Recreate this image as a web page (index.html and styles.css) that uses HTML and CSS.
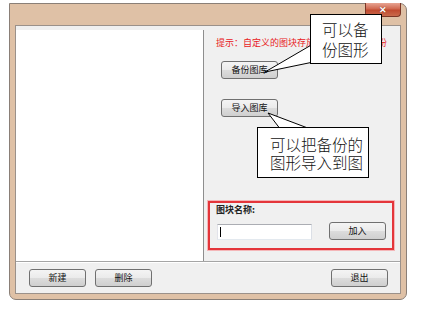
FILE: index.html
```html
<!DOCTYPE html>
<html lang="zh-CN">
<head>
    <title>图库管理</title>
    <link rel="stylesheet" href="styles.css">
</head>
<body>
    <div class="window">
        <div class="titlebar">
            <div class="close-btn">✕</div>
        </div>
        <div class="client">
            <div class="main">
                <div class="list"></div>
                <div class="side">
                    <p class="hint">提示：自定义的图块存放在图库中，请备份</p>
                    <button class="btn btn-backup">备份图库</button>
                    <button class="btn btn-import">导入图库</button>
                    <div class="name-group">
                        <div class="name-label">图块名称:</div>
                        <div class="name-row">
                            <div class="name-input"><span class="caret"></span></div>
                            <button class="btn">加入</button>
                        </div>
                    </div>
                </div>
            </div>
            <div class="bottom">
                <div class="bottom-left">
                    <button class="btn">新建</button>
                    <button class="btn">删除</button>
                </div>
                <button class="btn">退出</button>
            </div>
        </div>
    </div>

    <!-- callout tails, the boxes sit on top of them -->
    <svg class="tails" width="443" height="310" viewBox="0 0 443 310">
        <polygon points="313,44 265,72 323,60" />
        <polygon points="281,130 268,113 313,130" />
    </svg>
    <div class="callout callout-backup">可以备<br>份图形</div>
    <div class="callout callout-import">可以把备份的<br>图形导入到图</div>
</body>
</html>
```

FILE: styles.css
```css
body {
    margin: 0;
    background-color: #fff;
    font-family: "Noto Sans CJK SC", "Liberation Sans", sans-serif;
    position: relative;
    width: 443px;
    height: 310px;
    overflow: hidden;
}

.window {
    margin: 3px 0 0 9px;
    width: 398px;
    height: 297px;
    box-sizing: border-box;
    border: 1px solid #8a7f77;
    border-radius: 0 7px 7px 7px;
    background-color: #dfc1a6;
    display: flex;
    flex-direction: column;
}

.titlebar {
    height: 21px;
    display: flex;
    justify-content: flex-end;
    flex-shrink: 0;
}

.close-btn {
    width: 36px;
    height: 14px;
    margin: -1px 5px 0 0;
    box-sizing: border-box;
    border: 1px solid #7c3626;
    border-top: none;
    border-radius: 0 0 4px 4px;
    background: linear-gradient(#e7a493, #d0684f 45%, #c04a30 55%, #c96a4c);
    color: #fff;
    font-size: 9px;
    font-weight: bold;
    line-height: 13px;
    text-align: center;
    text-shadow: 0 0 1px #5a1a10;
}

.client {
    flex: 1;
    margin: 0 5px 5px 5px;
    border: 1px solid #9b918a;
    background-color: #f0f0f0;
    display: flex;
    flex-direction: column;
}

.main {
    height: 235px;
    display: flex;
    border-bottom: 1px solid #a5a5a5;
    box-shadow: 0 1px 0 #fff;
}

.list {
    width: 187px;
    margin-top: 4px;
    background-color: #fff;
    border-right: 1px solid #8e8e8e;
}

.side {
    flex: 1;
    display: flex;
    flex-direction: column;
    align-items: flex-start;
}

.hint {
    margin: 11px 0 0 12px;
    font-size: 9px;
    line-height: 11px;
    color: #e8201c;
    white-space: nowrap;
}

.btn {
    width: 57px;
    height: 18px;
    padding: 0;
    box-sizing: border-box;
    border: 1px solid #707070;
    border-radius: 3px;
    background: linear-gradient(#f4f4f4, #ebebeb 48%, #dcdcdc 52%, #cfcfcf);
    font-family: "Noto Sans CJK SC", sans-serif;
    font-size: 9px;
    line-height: 16px;
    color: #111;
}

.btn-backup {
    margin: 13px 0 0 17px;
}

.btn-import {
    margin: 20px 0 0 17px;
}

.name-group {
    margin: 84px 0 0 4px;
    width: 186px;
    height: 49px;
    box-sizing: border-box;
    border: 2px solid #e4353a;
    box-shadow: 0 0 0 1px #f4b6b8;
    padding: 1px 0 0 6px;
}

.name-label {
    font-size: 9px;
    line-height: 11px;
    font-weight: bold;
    color: #222;
}

.name-row {
    display: flex;
    align-items: center;
    margin-top: 7px;
}

.name-input {
    width: 95px;
    height: 16px;
    margin: 1px 0 0 1px;
    box-sizing: border-box;
    border: 1px solid #abadb3;
    border-color: #abadb3 #dbdfe6 #e3e9ef #e2e3ea;
    background-color: #fff;
    display: flex;
    align-items: center;
}

.caret {
    width: 1px;
    height: 10px;
    margin-left: 2px;
    background-color: #000;
}

.name-row .btn {
    margin-left: 17px;
}

.bottom {
    flex: 1;
    display: flex;
    justify-content: space-between;
    align-items: flex-start;
    padding: 7px 12px 0 13px;
}

.bottom-left {
    display: flex;
    gap: 9px;
}

.tails {
    position: absolute;
    top: 0;
    left: 0;
}

.tails polygon {
    fill: #fff;
    stroke: #000;
    stroke-width: 1;
}

.callout {
    position: absolute;
    box-sizing: border-box;
    border: 1px solid #000;
    background-color: #fff;
    font-size: 15.5px;
    font-weight: 300;
    color: #111;
    white-space: nowrap;
    overflow: hidden;
}

.callout-backup {
    left: 310px;
    top: 14px;
    width: 72px;
    height: 50px;
    padding: 4px 0 0 11px;
    line-height: 20px;
}

.callout-import {
    left: 257px;
    top: 127px;
    width: 112px;
    height: 51px;
    padding: 7px 0 0 12px;
    line-height: 18px;
}
```
